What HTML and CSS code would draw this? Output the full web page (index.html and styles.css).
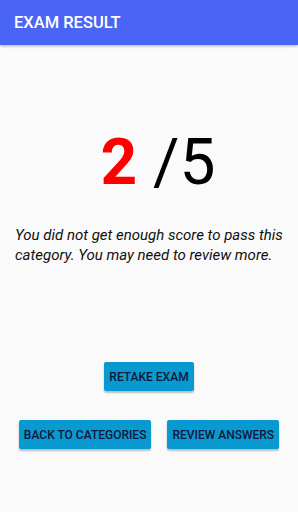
FILE: index.html
```html
<!DOCTYPE html>
<html>
<head>
<meta charset="utf-8">
<link rel="stylesheet" href="styles.css">
</head>
<body>
<div class="appbar"><span class="title">EXAM RESULT</span></div>
<main class="content">
  <div class="score"><span class="got">2</span> <span class="total">/5</span></div>
  <p class="message">You did not get enough score to pass this category. You may need to review more.</p>
  <div class="actions">
    <div class="row"><button class="btn">RETAKE EXAM</button></div>
    <div class="row two"><button class="btn">BACK TO CATEGORIES</button><button class="btn">REVIEW ANSWERS</button></div>
  </div>
</main>
</body>
</html>
```
FILE: styles.css
```css
html, body { margin: 0; padding: 0; }
body {
  width: 298px; height: 512px; overflow: hidden;
  background: #fafafa;
  font-family: Roboto, "Liberation Sans", sans-serif;
}
.appbar {
  height: 45px;
  background: #4a64f5;
  box-shadow: 0 1px 3px rgba(0,0,0,0.3);
  display: flex; align-items: center;
  padding-left: 14px;
}
.title { color: #fff; font-size: 16.5px; font-weight: 500; }
.content { display: flex; flex-direction: column; }
.score {
  margin-top: 80px;
  padding-left: 18px;
  text-align: center;
  font-size: 64px;
  line-height: 75px;
  color: #000;
}
.got { color: #ff0000; font-weight: 700; }
.total { font-weight: 400; }
.message {
  margin: 25px 14px 0 15px;
  font-style: italic;
  font-size: 15px;
  line-height: 20px;
  color: #111;
}
.actions { margin-top: 97px; display: flex; flex-direction: column; gap: 29px; }
.row { display: flex; justify-content: center; gap: 16px; }
.btn {
  background: #0899d0;
  border: none; border-radius: 2px;
  color: #14163a;
  font-family: Roboto, "Liberation Sans", sans-serif;
  font-size: 12px; font-weight: 500;
  height: 29px; padding: 0 5px;
  box-shadow: 0 2px 2px rgba(0,0,0,0.25);
}
```
